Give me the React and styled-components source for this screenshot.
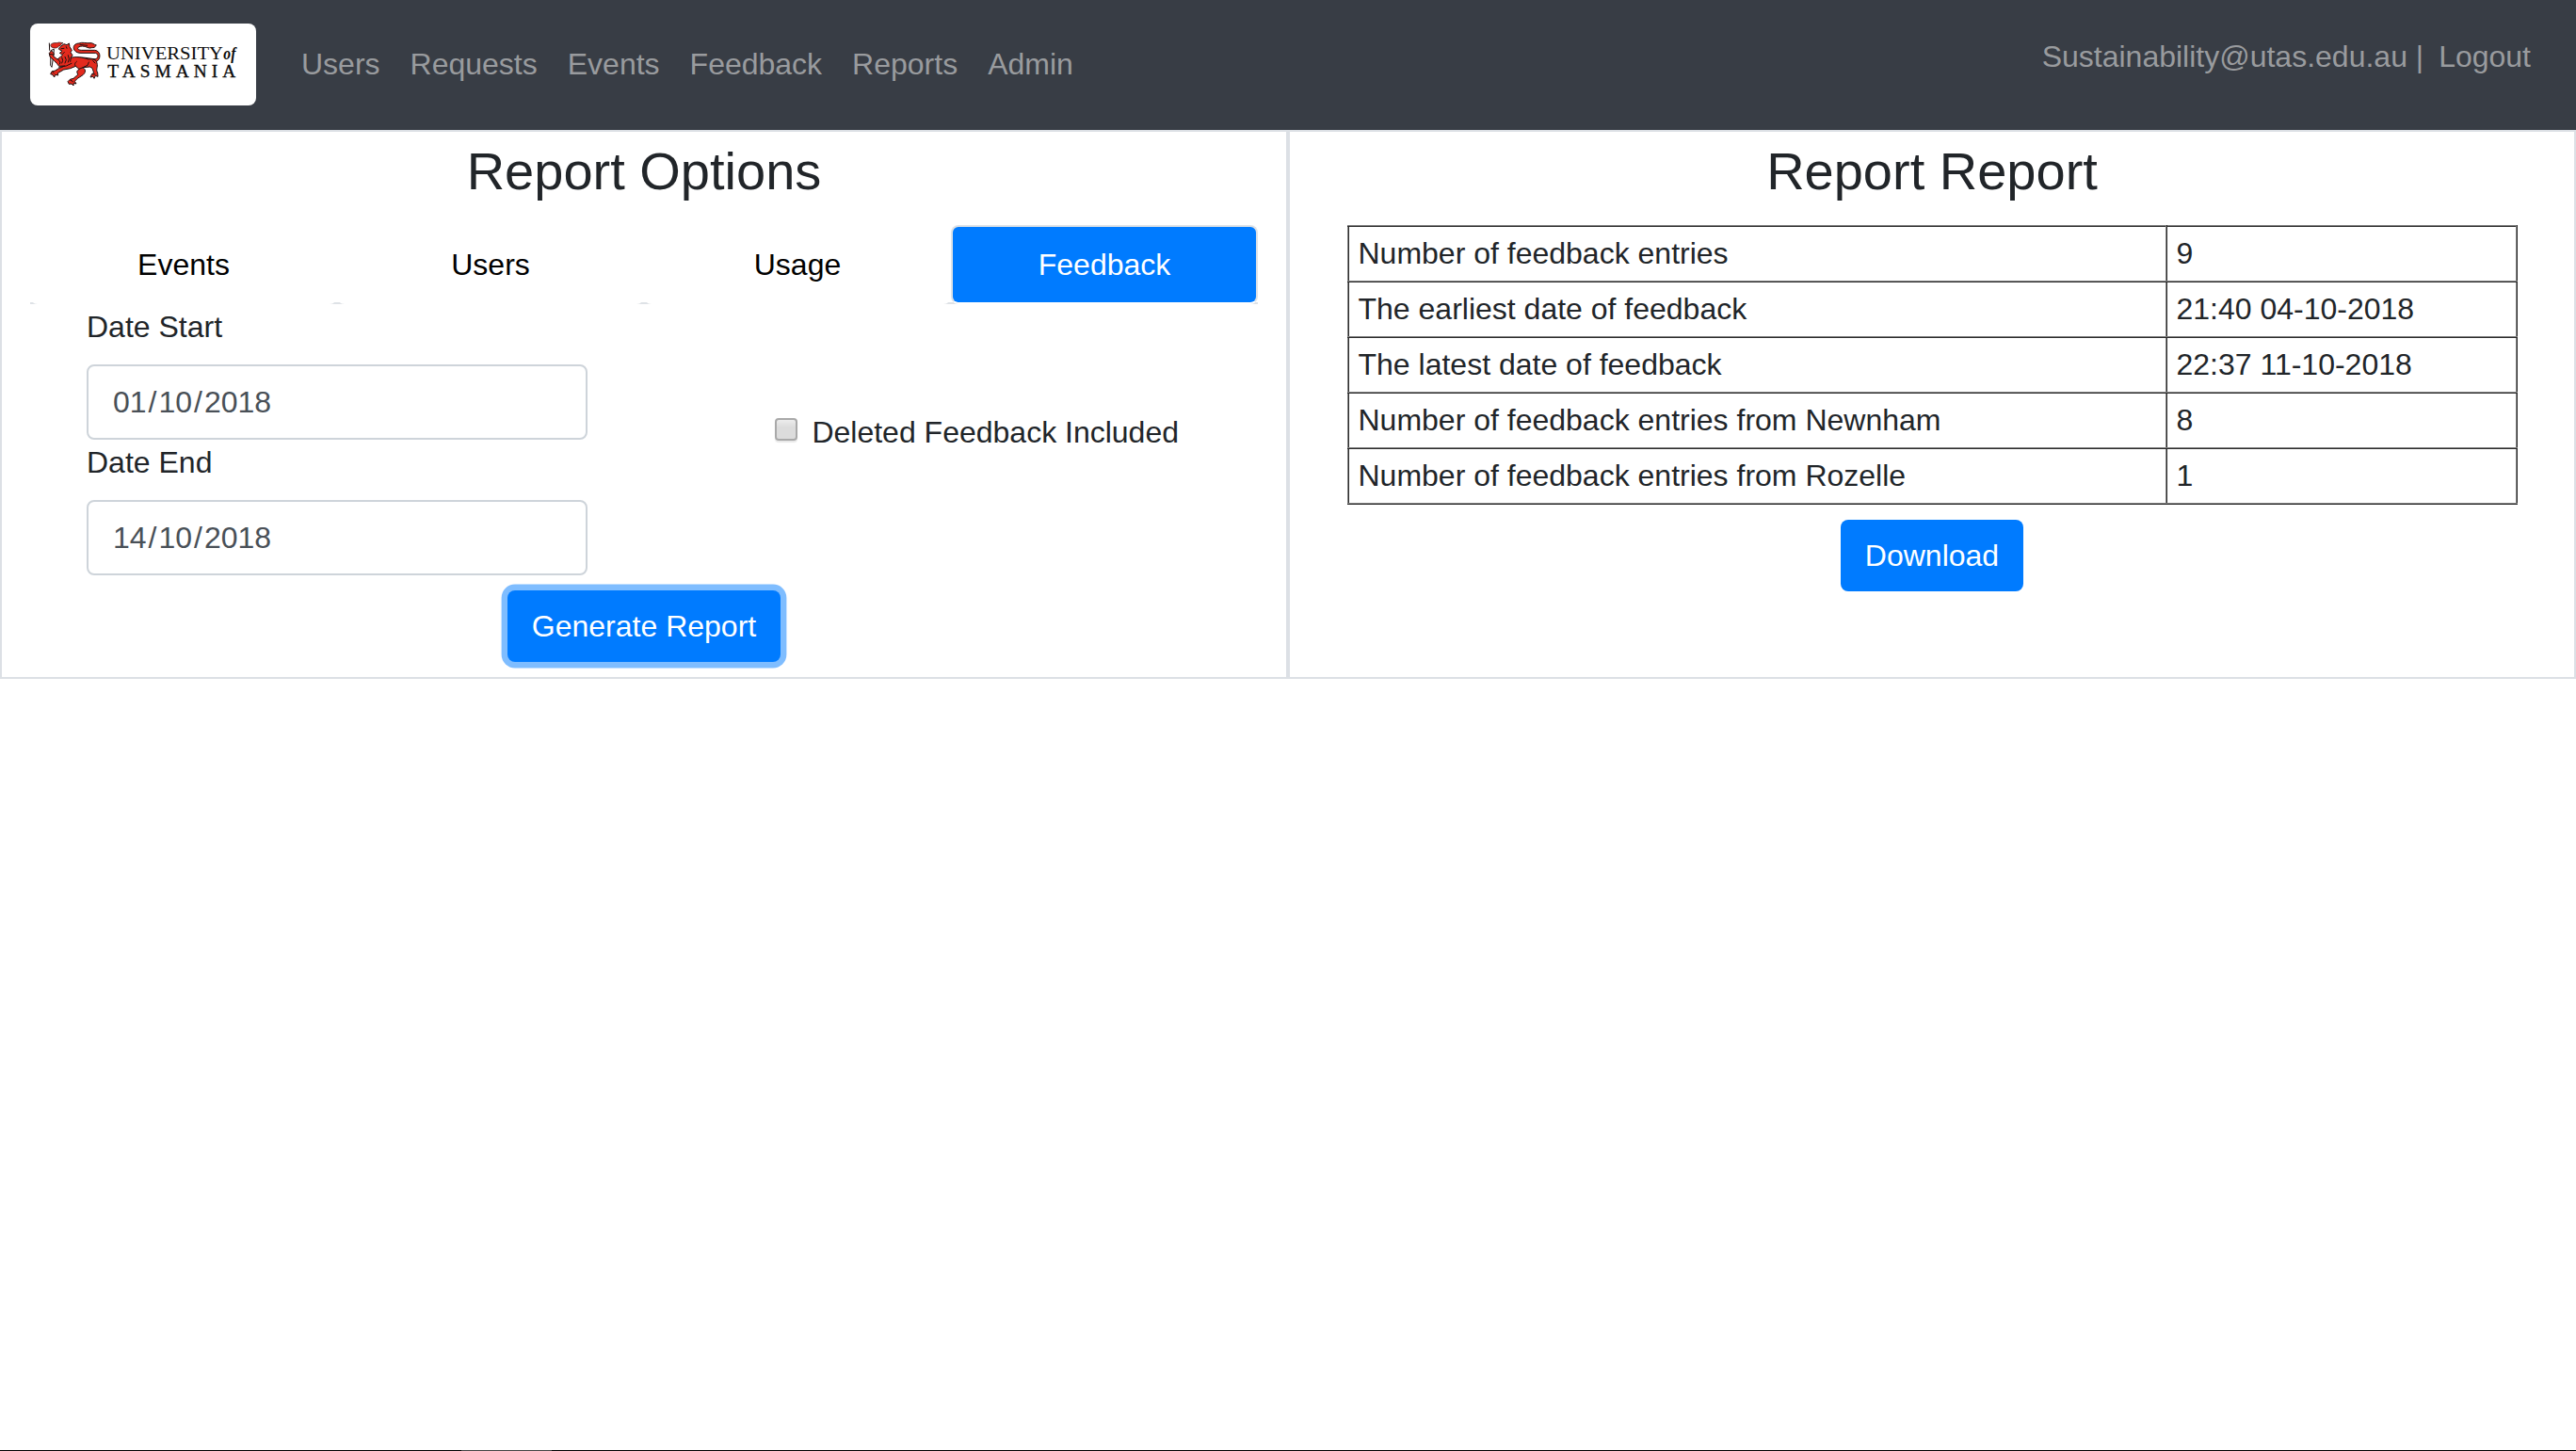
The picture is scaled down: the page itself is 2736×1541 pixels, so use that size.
import React from 'react';
import styled, { createGlobalStyle } from 'styled-components';

const GlobalStyle = createGlobalStyle`
  *, *::before, *::after { box-sizing: border-box; }
  body {
    margin: 0;
    background: #fff;
    color: #212529;
    font-family: "Liberation Sans", Arial, sans-serif;
    font-size: 32px;
    line-height: 48px;
  }
`;

const Page = styled.div`
  display: flex;
  flex-direction: column;
  height: 1541px;
`;

const Navbar = styled.nav`
  display: flex;
  align-items: flex-start;
  height: 138px;
  padding: 25px 48px 0 32px;
  background: #383d45;
  color: #999b9e;
`;

const Brand = styled.a`
  display: block;
  width: 240px;
  height: 87px;
  margin-right: 48px;
  border-radius: 8px;
  background: #fff;
  overflow: hidden;
`;

const LogoArt = styled.svg`
  display: block;
  width: 240px;
  height: 87px;
`;

const NavLinks = styled.div`
  display: flex;
  gap: 32px;
  padding-top: 19px;
`;

const NavLink = styled.a`
  color: inherit;
  white-space: pre;
`;

const Account = styled.div`
  display: flex;
  gap: 16px;
  margin-left: auto;
  padding-top: 11px;
`;

const Panels = styled.main`
  display: grid;
  grid-template-columns: repeat(2, minmax(0, 1fr));
  height: 583px;
`;

const Panel = styled.section`
  display: flex;
  flex-direction: column;
  align-items: center;
  border: 2px solid #dce0e5;
  padding: 8px ${(p) => p.$gutter}px 0;
`;

const Title = styled.h3`
  margin: 0 0 24px;
  font-size: 56px;
  font-weight: 400;
  line-height: 67px;
`;

const Tabs = styled.div`
  display: grid;
  grid-template-columns: repeat(4, 1fr);
  align-self: stretch;
  height: 84px;
  border-bottom: 2px solid #dee2e6;
`;

const Tab = styled.a`
  height: 84px;
  padding: 16px 0;
  border: 2px solid transparent;
  border-color: ${(p) => (p.$active ? '#dee2e6 #dee2e6 #fff' : '#fff')};
  border-radius: 8px;
  background: ${(p) => (p.$active ? '#007bff' : '#fff')};
  color: ${(p) => (p.$active ? '#fff' : '#000')};
  text-align: center;
`;

const Filters = styled.div`
  display: flex;
  justify-content: space-between;
  align-self: stretch;
  padding: 0 84px 0 60px;
`;

const Dates = styled.div`
  display: flex;
  flex-direction: column;
  width: 532px;
`;

const DateLabel = styled.label`
  display: block;
  margin-bottom: 16px;
`;

const DateInput = styled.div`
  display: flex;
  gap: 2px;
  height: 80px;
  padding: 14px 26px;
  border: 2px solid #ced4da;
  border-radius: 8px;
  color: #495057;
`;

const CheckRow = styled.label`
  display: flex;
  gap: 15px;
  padding-top: 112px;
`;

const Checkbox = styled.span`
  width: 24px;
  height: 24px;
  margin-top: 9px;
  border: 2px solid #a9a9a9;
  border-radius: 4px;
  background: linear-gradient(#ececec, #dcdcdc 40%, #dcdcdc);
  box-shadow: 0 2px 1px rgba(0, 0, 0, 0.09);
`;

const Button = styled.button`
  height: 76px;
  margin: 16px 0 0;
  padding: 0 26px;
  border: 0;
  border-radius: 8px;
  background: #007bff;
  color: #fff;
  font: inherit;
  box-shadow: ${(p) => (p.$focused ? '0 0 0 6.4px rgba(0, 123, 255, 0.5)' : 'none')};
`;

const Results = styled.table`
  width: 1243px;
  border-collapse: collapse;
  table-layout: fixed;
  border: 2px outset #808080;
`;

const Cell = styled.td`
  width: ${(p) => p.$width};
  height: 59px;
  padding: 4px 10px 5px;
  border: 2px inset #808080;
`;

const Taskbar = styled.div`
  height: 1px;
  margin-top: auto;
  padding-left: 490px;
  background: #000;
`;

const TaskbarItem = styled.div`
  width: 96px;
  height: 1px;
  background: #444;
`;

const LINKS = ['Users', 'Requests', 'Events', 'Feedback', 'Reports', 'Admin'];
const TABS = ['Events', 'Users', 'Usage', 'Feedback'];
const DATES = [
  ['Date Start', ['01', '10', '2018']],
  ['Date End', ['14', '10', '2018']],
];
const ROWS = [
  ['Number of feedback entries', '9'],
  ['The earliest date of feedback', '21:40 04-10-2018'],
  ['The latest date of feedback', '22:37 11-10-2018'],
  ['Number of feedback entries from Newnham', '8'],
  ['Number of feedback entries from Rozelle', '1'],
];

function Logo() {
  return (
    <LogoArt viewBox="36 45 720 261">
      <g stroke="#1d1010" strokeLinejoin="round" strokeLinecap="round">
        <path d="M172 158C190 148 216 155 240 158C254 160 256 141 244 139L198 139C169 139 167 108 192 108C202 103 216 109 228 107C236 106 238 112 247 114C240 118 247 122 232 122C222 126 218 118 202 117C184 118 183 130 200 130L242 130C264 132 262 165 244 167" fill="#e42a1d" strokeWidth="3" />
        <path d="M190 143L240 143C249 146 248 152 240 152C220 149 200 145 183 151C176 146 174 138 176 134Z" fill="#fff" stroke="none" />
        <path d="M102 132L101 178L105 184L110 150L112 128Z" fill="#fff" strokeWidth="3" />
        <path d="M102 112C110 103 119 109 128 105L141 107C134 109 136 115 128 117C121 125 110 125 103 119Z" fill="#e42a1d" strokeWidth="2" />
        <path d="M132 119L144 110L153 113L160 108L162 119L169 130L165 137L171 146L166 154C181 149 204 153 221 159C235 157 248 160 249 171C253 184 244 193 251 201L252 214L244 211L240 220L236 214L228 216L233 206L239 202L234 187L226 183L204 185C216 193 212 204 201 211L187 220L178 229L183 237L175 235L174 243L168 237L160 238L156 230L163 223L174 220L188 208L185 198L192 190L181 181L164 188L143 192L124 203L125 210L116 208L113 216L108 208L101 206L105 198L116 195L127 188L146 180L128 181L121 172L112 163L99 151L97 139L104 132L112 140L110 149L123 159L133 151L139 145L130 139L138 133L128 127Z" fill="#e42a1d" strokeWidth="3" />
        <path d="M97 108L98 130M97 142L110 144M135 125L144 124M140 141L145 137M151 119L153 124M126 160L132 168L130 174M137 153L140 163L137 171M147 151L151 161L147 171M157 146L160 158L157 168M166 154L164 166M128 184L151 180L168 172M181 181C176 176 179 170 184 166M204 185L219 178L223 168M192 190L204 185M107 198L112 203M164 225L172 230M234 206L243 207M236 164L243 171M195 112L218 115" fill="none" strokeWidth="3" />
      </g>
      <g fill="#0b0b0b" fontFamily="'Liberation Serif', 'Times New Roman', serif">
        <text x="279" y="158" fontSize="58" textLength="372" lengthAdjust="spacingAndGlyphs">UNIVERSITY</text>
        <text x="652" y="158" fontSize="57" fontStyle="italic" fontWeight="700" textLength="39" lengthAdjust="spacingAndGlyphs">of</text>
        <text x="283" y="216" fontSize="58" stroke="#0b0b0b" strokeWidth="1" textLength="408" lengthAdjust="spacing">TASMANIA</text>
      </g>
    </LogoArt>
  );
}

export default function App() {
  return (
    <Page>
      <GlobalStyle />
      <Navbar>
        <Brand><Logo /></Brand>
        <NavLinks>
          {LINKS.map((l) => <NavLink key={l}>{l}</NavLink>)}
        </NavLinks>
        <Account>
          <span>Sustainability@utas.edu.au |</span>
          <span>Logout</span>
        </Account>
      </Navbar>
      <Panels>
        <Panel $gutter={30}>
          <Title>Report Options</Title>
          <Tabs>
            {TABS.map((t) => <Tab key={t} $active={t === 'Feedback'}>{t}</Tab>)}
          </Tabs>
          <Filters>
            <Dates>
              {DATES.map(([label, [d, m, y]]) => (
                <React.Fragment key={label}>
                  <DateLabel>{label}</DateLabel>
                  <DateInput>
                    <span>{d}</span><span>/</span><span>{m}</span><span>/</span><span>{y}</span>
                  </DateInput>
                </React.Fragment>
              ))}
            </Dates>
            <CheckRow>
              <Checkbox />
              <span>Deleted Feedback Included</span>
            </CheckRow>
          </Filters>
          <Button $focused>Generate Report</Button>
        </Panel>
        <Panel $gutter={60}>
          <Title>Report Report</Title>
          <Results>
            <tbody>
              {ROWS.map(([name, value]) => (
                <tr key={name}>
                  <Cell $width="869px">{name}</Cell>
                  <Cell $width="auto">{value}</Cell>
                </tr>
              ))}
            </tbody>
          </Results>
          <Button>Download</Button>
        </Panel>
      </Panels>
      <Taskbar><TaskbarItem /></Taskbar>
    </Page>
  );
}
